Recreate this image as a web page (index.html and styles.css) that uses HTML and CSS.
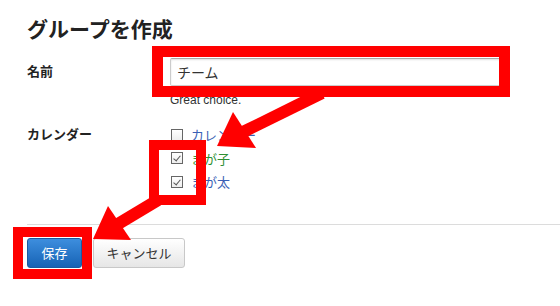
FILE: index.html
```html
<!DOCTYPE html>
<html lang="ja">
<head>
    <meta charset="UTF-8">
    <meta name="viewport" content="width=device-width, initial-scale=1.0">
    <title>グループを作成</title>
    <link rel="stylesheet" href="styles.css">
</head>
<body>

    <div class="page">
        <h1 class="title">グループを作成</h1>

        <form class="group-form">
            <div class="row">
                <label class="row-label">名前</label>
                <div class="row-field">
                    <input type="text" class="name-input" value="チーム">
                    <p class="hint">Great choice.</p>
                </div>
            </div>

            <div class="row row-calendars">
                <label class="row-label">カレンダー</label>
                <ul class="cal-list">
                    <li><span class="box"></span><a href="#" class="cal-blue">カレンダー</a></li>
                    <li><span class="box checked"></span><a href="#" class="cal-green">まが子</a></li>
                    <li><span class="box checked"></span><a href="#" class="cal-blue">まが太</a></li>
                </ul>
            </div>

            <div class="actions">
                <button type="button" class="btn btn-save">保存</button>
                <button type="button" class="btn btn-cancel">キャンセル</button>
            </div>
        </form>

        <!-- 赤い注釈 -->
        <svg class="marks" width="560" height="306" viewBox="0 0 560 306">
            <rect x="157.5" y="51.5" width="347" height="40" fill="none" stroke="#ff0000" stroke-width="11"/>
            <line x1="322" y1="93" x2="243" y2="132" stroke="#ff0000" stroke-width="12"/>
            <polygon points="233,112 217,146 256,148" fill="#ff0000"/>

            <rect x="154" y="145" width="47" height="55" fill="none" stroke="#ff0000" stroke-width="10"/>
            <line x1="158" y1="200" x2="118" y2="224" stroke="#ff0000" stroke-width="12"/>
            <polygon points="108,206 93,239 131,240" fill="#ff0000"/>

            <rect x="18" y="232" width="69" height="42" fill="none" stroke="#ff0000" stroke-width="10"/>
        </svg>
    </div>

</body>
</html>
```

FILE: styles.css
```css
body {
    font-family: "Liberation Sans", "Noto Sans CJK JP", sans-serif;
    margin: 0;
    padding: 0;
    background-color: #fff;
    color: #333;
    overflow: hidden;
}

.page {
    position: relative;
    padding: 15px 0 0 27px;
    height: 291px;
}

.title {
    margin: 0;
    font-size: 21px;
    line-height: 30px;
    font-weight: bold;
    color: #222;
}

.group-form {
    margin-top: 13px;
}

.row {
    display: flex;
}

.row-label {
    width: 143px;
    flex-shrink: 0;
    font-size: 13px;
    font-weight: bold;
    color: #222;
    line-height: 28px;
}

.name-input {
    display: block;
    box-sizing: border-box;
    width: 336px;
    height: 28px;
    margin: 0;
    padding: 0 6px;
    border: 1px solid #ccc;
    border-top-color: #aaa;
    border-radius: 2px;
    box-shadow: inset 0 1px 2px rgba(0, 0, 0, 0.12);
    font-family: inherit;
    font-size: 14px;
    color: #333;
    outline: none;
}

.hint {
    margin: 7px 0 0;
    font-size: 12px;
    line-height: 14px;
    color: #333;
}

.row-calendars {
    margin-top: 16px;
}

.row-calendars .row-label {
    line-height: 23.5px;
}

.cal-list {
    list-style-type: none;
    margin: 0;
    padding: 0;
}

.cal-list li {
    display: flex;
    align-items: center;
    height: 23.5px;
    font-size: 13px;
}

.box {
    position: relative;
    box-sizing: border-box;
    width: 12px;
    height: 12px;
    margin: 0 8px 0 1px;
    border: 1px solid #666;
    background: linear-gradient(#fff, #eee);
}

.box.checked::after {
    content: "";
    position: absolute;
    left: 3px;
    top: 1px;
    width: 3px;
    height: 6px;
    border: solid #555;
    border-width: 0 1px 1px 0;
    transform: rotate(40deg);
}

.cal-list a {
    text-decoration: none;
}

.cal-blue {
    color: #3a5fb5;
}

.cal-green {
    color: #2e8f34;
}

.actions {
    display: flex;
    gap: 11px;
    margin-top: 30px;
    padding-top: 13px;
    border-top: 1px solid #dcdcdc;
}

.btn {
    height: 30px;
    padding: 0 12px;
    border-radius: 3px;
    font-family: inherit;
    font-size: 13px;
    cursor: pointer;
}

.btn-save {
    width: 55px;
    color: #fff;
    border: 1px solid #1b5aa0;
    background: linear-gradient(#3d8ede, #1763b5);
}

.btn-cancel {
    width: 92px;
    color: #333;
    border: 1px solid #c8c8c8;
    background: linear-gradient(#fff, #e6e6e6);
}

.marks {
    position: absolute;
    left: 0;
    top: 0;
    pointer-events: none;
}
```
